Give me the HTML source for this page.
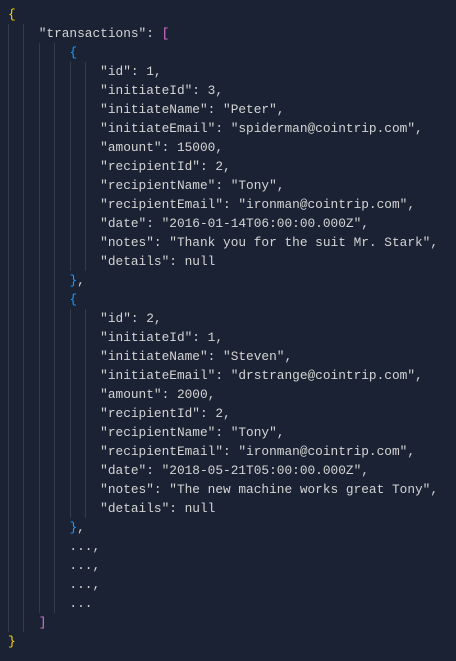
<!DOCTYPE html>
<html><head><style>
html,body{margin:0;padding:0;background:#1b2233;width:456px;height:661px;overflow:hidden}
pre{margin:0;position:absolute;left:8px;top:5px;font-family:"Liberation Mono",monospace;font-size:12.8px;line-height:19px;color:#d4d4d4}
.g{position:absolute;width:1px;background:#343c4c}
.y{color:#ffd700}.p{color:#da70d6}.b{color:#179fff}
</style></head><body>
<div class="g" style="left:8px;top:24px;height:608px"></div>
<div class="g" style="left:23px;top:24px;height:608px"></div>
<div class="g" style="left:39px;top:43px;height:570px"></div>
<div class="g" style="left:54px;top:43px;height:570px"></div>
<div class="g" style="left:70px;top:62px;height:209px"></div>
<div class="g" style="left:85px;top:62px;height:209px"></div>
<div class="g" style="left:70px;top:309px;height:209px"></div>
<div class="g" style="left:85px;top:309px;height:209px"></div>
<pre><span class="y">{</span>
    "transactions": <span class="p">[</span>
        <span class="b">{</span>
            "id": 1,
            "initiateId": 3,
            "initiateName": "Peter",
            "initiateEmail": "spiderman@cointrip.com",
            "amount": 15000,
            "recipientId": 2,
            "recipientName": "Tony",
            "recipientEmail": "ironman@cointrip.com",
            "date": "2016-01-14T06:00:00.000Z",
            "notes": "Thank you for the suit Mr. Stark",
            "details": null
        <span class="b">}</span>,
        <span class="b">{</span>
            "id": 2,
            "initiateId": 1,
            "initiateName": "Steven",
            "initiateEmail": "drstrange@cointrip.com",
            "amount": 2000,
            "recipientId": 2,
            "recipientName": "Tony",
            "recipientEmail": "ironman@cointrip.com",
            "date": "2018-05-21T05:00:00.000Z",
            "notes": "The new machine works great Tony",
            "details": null
        <span class="b">}</span>,
        ...,
        ...,
        ...,
        ...
    <span class="p">]</span>
<span class="y">}</span></pre>
</body></html>
